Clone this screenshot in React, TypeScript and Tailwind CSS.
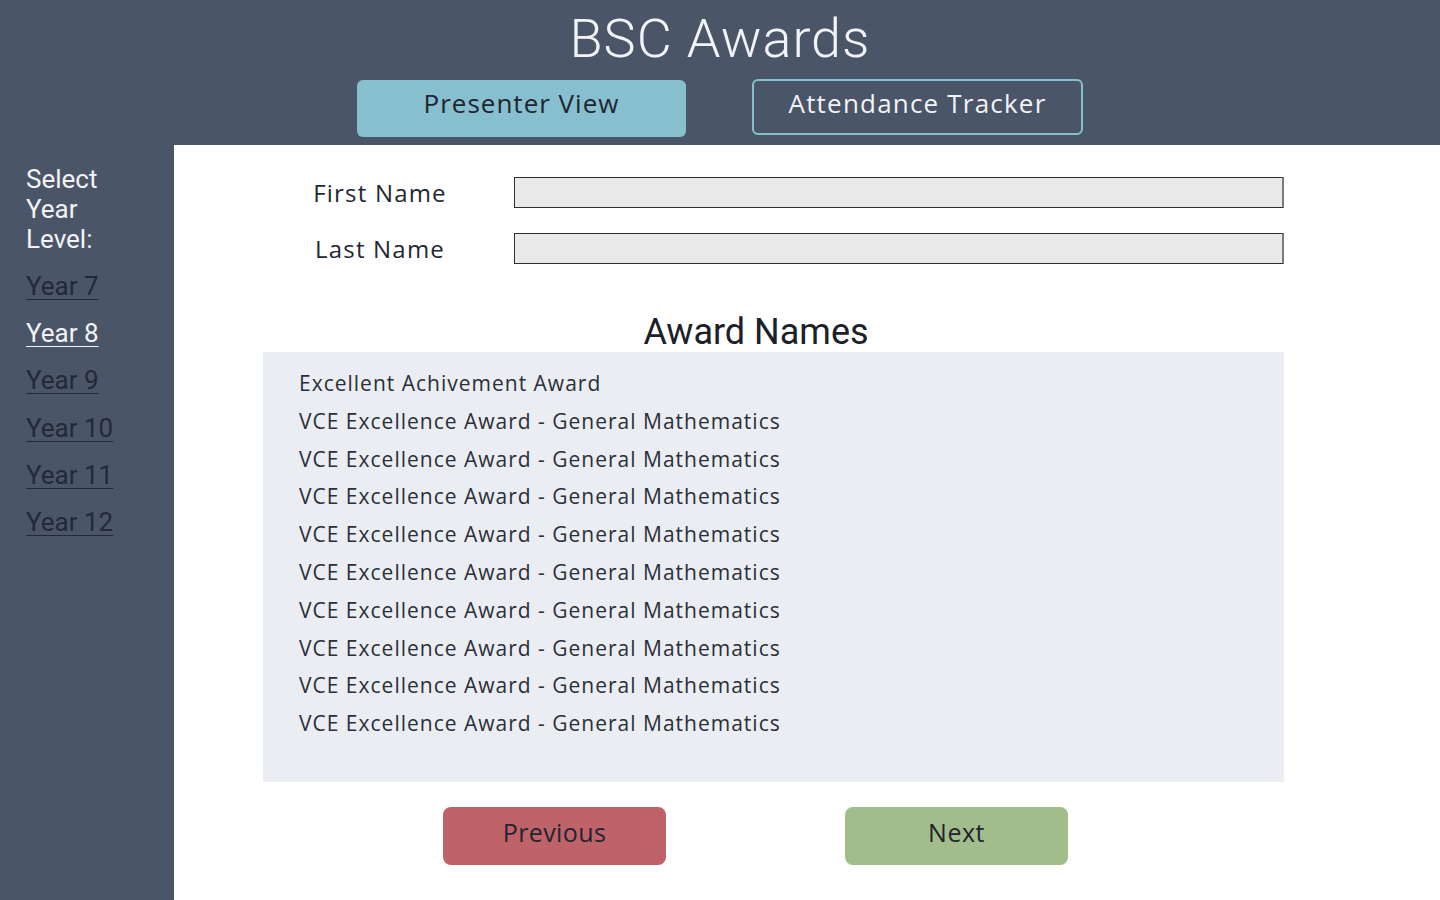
import React from "react";

const mont = { fontFamily: '"Open Sans", "Noto Sans", sans-serif' };

export default function App() {
  const years = ["Year 7", "Year 8", "Year 9", "Year 10", "Year 11", "Year 12"];
  const awards = [
    "Excellent Achivement Award",
    ...Array(9).fill("VCE Excellence Award - General Mathematics"),
  ];
  return (
    <div className="w-[1440px] h-[900px] flex flex-col bg-[#4b5568] overflow-hidden font-['Roboto',sans-serif]">
      <header className="h-[145px] flex flex-col items-center pt-[12px] shrink-0">
        <h1 className="text-[54px] leading-[54px] tracking-[1px] text-[#f1f3f6] font-light">BSC Awards</h1>
        <div className="flex justify-center items-start gap-[66px] mt-[13px]">
          <button
            style={mont}
            className="w-[329px] h-[57px] mt-px rounded-[6px] bg-[#87bfcf] text-[#1f2530] text-[26px] tracking-[1px] pb-[10px]"
          >
            Presenter View
          </button>
          <button
            style={mont}
            className="w-[331px] h-[56px] rounded-[6px] border-2 border-[#87bfcf] text-[#f1f3f6] text-[26px] tracking-[1.2px] pb-[8px]"
          >
            Attendance Tracker
          </button>
        </div>
      </header>
      <div className="flex flex-1">
        <aside className="w-[174px] shrink-0 pl-[26px] pt-[19px]">
          <div className="text-[26px] leading-[30px] text-[#f1f3f6]">
            Select
            <br />
            Year
            <br />
            Level:
          </div>
          <ul className="mt-[9px]">
            {years.map((y) => (
              <li
                key={y}
                className={`text-[26px] leading-[47.2px] underline underline-offset-[4px] decoration-1 ${
                  y === "Year 8" ? "text-[#f1f3f6]" : "text-[#232936]"
                }`}
              >
                {y}
              </li>
            ))}
          </ul>
        </aside>
        <main className="flex-1 bg-white pl-[89px] pt-[32px]">
          <div className="flex flex-col gap-[25px] w-[1021px]">
            {["First Name", "Last Name"].map((l) => (
              <div key={l} className="flex items-center">
                <label style={mont} className="w-[234px] text-center text-[24px] leading-[31px] text-[#222831] tracking-[1.2px]">
                  {l}
                </label>
                <div className="ml-[17px] w-[770px] h-[31px] bg-[#e9e9e9] border border-[#2f2f2f] border-r-2 border-r-[#7c7c7c]" />
              </div>
            ))}
          </div>
          <h2 className="w-[1021px] text-center pr-[35px] mt-[48px] text-[36px] leading-[40px] text-[#1c2029] font-normal">
            Award Names
          </h2>
          <div className="w-[1021px] h-[430px] bg-[#eaedf2] pl-[36px] pt-[13px]">
            {awards.map((a, i) => (
              <div key={i} style={mont} className="text-[21px] leading-[37.8px] text-[#2a2f38] tracking-[1px]">
                {a}
              </div>
            ))}
          </div>
          <div className="flex gap-[179px] ml-[180px] mt-[25px]">
            <button
              style={mont}
              className="w-[223px] h-[58px] rounded-[8px] bg-[#c0626a] text-[#1f2530] text-[25px] tracking-[0.4px] pb-[7px]"
            >
              Previous
            </button>
            <button
              style={mont}
              className="w-[223px] h-[58px] rounded-[8px] bg-[#a2bd8c] text-[#1f2530] text-[25px] tracking-[0.5px] pb-[7px]"
            >
              Next
            </button>
          </div>
        </main>
      </div>
    </div>
  );
}
